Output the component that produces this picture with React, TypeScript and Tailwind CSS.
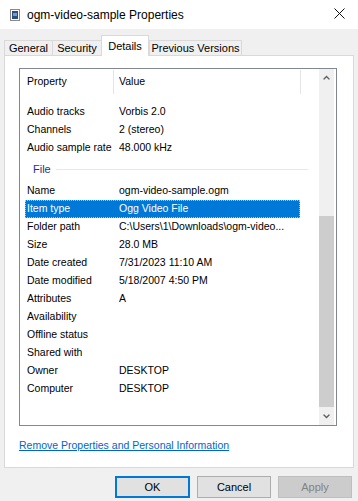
import React from "react";

type Row = {
	k: string;
	v?: string;
	group?: boolean;
	selected?: boolean;
};

const rows: Row[] = [
	{ k: "Audio", group: true },
	{ k: "Audio tracks", v: "Vorbis 2.0" },
	{ k: "Channels", v: "2 (stereo)" },
	{ k: "Audio sample rate", v: "48.000 kHz" },
	{ k: "File", group: true },
	{ k: "Name", v: "ogm-video-sample.ogm" },
	{ k: "Item type", v: "Ogg Video File", selected: true },
	{ k: "Folder path", v: "C:\\Users\\1\\Downloads\\ogm-video..." },
	{ k: "Size", v: "28.0 MB" },
	{ k: "Date created", v: "7/31/2023 11:10 AM" },
	{ k: "Date modified", v: "5/18/2007 4:50 PM" },
	{ k: "Attributes", v: "A" },
	{ k: "Availability" },
	{ k: "Offline status" },
	{ k: "Shared with" },
	{ k: "Owner", v: "DESKTOP" },
	{ k: "Computer", v: "DESKTOP" },
];

const tabs = [
	{ label: "General", w: "w-[49px]" },
	{ label: "Security", w: "w-[50px]" },
	{ label: "Details", w: "w-[48px]", active: true },
	{ label: "Previous Versions", w: "w-[93px]" },
];

// small file icon in the title bar
const FileIcon = () => (
	<svg width="10" height="12" viewBox="0 0 10 12">
		<rect x="0.5" y="0.5" width="9" height="11" fill="#fff" stroke="#8a8a8a" />
		<rect x="2" y="2" width="6" height="8" fill="#2d4f7f" />
		<rect x="3" y="4" width="4" height="3" fill="#6f9ed0" />
	</svg>
);

const Arrow = ({ down }: { down?: boolean }) => (
	<svg width="7" height="5" viewBox="0 0 7 5" className={down ? "rotate-180" : ""}>
		<path d="M0 4 L3.5 0.5 L7 4 L5.8 4.8 L3.5 2.5 L1.2 4.8 Z" fill="#606060" />
	</svg>
);

const ListRow = ({ row }: { row: Row }) => {
	if (row.group) {
		return (
			<div className="flex h-[25px] items-center pl-[13px] pr-[11px]">
				<span className="text-[11px] text-[#1e3287]">{row.k}</span>
				<div className="ml-[5px] h-px flex-1 bg-[#e2e8ef]" />
			</div>
		);
	}
	return (
		<div
			className={
				"ml-[5px] flex h-[18px] w-[275px] items-center whitespace-nowrap " +
				(row.selected
					? "bg-[#0078d7] text-white outline-1 outline-dotted -outline-offset-1 outline-[#9cc8ee]"
					: "")
			}
		>
			<div className="w-[94px] overflow-hidden pl-[2px]">{row.k}</div>
			<div className="flex-1 overflow-hidden">{row.v ?? ""}</div>
		</div>
	);
};

export default function App() {
	return (
		<div className="flex h-[501px] w-[358px] flex-col overflow-hidden bg-[#f0f0f0] font-['Liberation_Sans',Arial,sans-serif] text-[10.5px] text-black">
			{/* title bar */}
			<div className="flex h-[29px] shrink-0 items-center bg-white pl-[10px] pr-[10px]">
				<FileIcon />
				<span className="ml-[7px] text-[12px]">ogm-video-sample Properties</span>
				<svg width="11" height="11" viewBox="0 0 11 11" className="ml-auto mr-[3px] -mt-[2px]">
					<path d="M0.5 0.5 L10.5 10.5 M10.5 0.5 L0.5 10.5" stroke="#111" strokeWidth="1" />
				</svg>
			</div>

			{/* tabs */}
			<div className="flex h-[26px] shrink-0 items-end pl-[4px] text-[11px]">
				{tabs.map((t) =>
					t.active ? (
						<div
							key={t.label}
							className={`${t.w} relative z-10 -mb-px flex h-[21px] items-center justify-center border border-b-0 border-[#d9d9d9] bg-white`}
						>
							{t.label}
						</div>
					) : (
						<div
							key={t.label}
							className={`${t.w} flex h-[15px] items-center justify-center border border-b-0 border-[#d9d9d9] bg-[#f0f0f0] -mr-px`}
						>
							{t.label}
						</div>
					)
				)}
			</div>

			{/* panel */}
			<div className="mx-[4px] flex h-[413px] shrink-0 flex-col border border-[#d9d9d9] bg-white pl-[14px] pr-[12px] pt-[12px]">
				<div className="flex h-[358px] w-[318px] border border-[#828790]">
					<div className="flex w-[299px] flex-col">
						{/* header */}
						<div className="flex h-[25px] shrink-0">
							<div className="flex w-[93px] items-center pl-[7px]">Property</div>
							<div className="mt-px w-px bg-[#e5e5e5]" />
							<div className="flex w-[186px] items-center pl-[5px]">Value</div>
							<div className="mt-px w-px bg-[#e5e5e5]" />
						</div>
						{/* body, scrolled a little */}
						<div className="flex-1 overflow-hidden">
							<div className="-mt-[16px]">
								{rows.map((r) => (
									<ListRow key={r.k} row={r} />
								))}
							</div>
						</div>
					</div>
					{/* scrollbar */}
					<div className="flex w-[15px] flex-col bg-[#f0f0f0]">
						<div className="flex h-[17px] items-center justify-center">
							<Arrow />
						</div>
						<div className="h-[130px]" />
						<div className="h-[191px] bg-[#cdcdcd]" />
						<div className="h-px" />
						<div className="flex h-[17px] items-center justify-center">
							<Arrow down />
						</div>
					</div>
				</div>
				<div className="mt-[12px] leading-[14px]">
					<span className="text-[#0066cc] underline">Remove Properties and Personal Information</span>
				</div>
			</div>

			{/* buttons */}
			<div className="mt-[8px] flex justify-end gap-[7px] pr-[6px] text-[11px]">
				<button className="h-[22px] w-[75px] border-2 border-[#0078d7] bg-[#e1e1e1]">OK</button>
				<button className="h-[22px] w-[74px] border border-[#adadad] bg-[#e1e1e1]">Cancel</button>
				<button className="h-[22px] w-[74px] border border-[#bfbfbf] bg-[#cccccc] text-[#838383]">Apply</button>
			</div>
		</div>
	);
}
